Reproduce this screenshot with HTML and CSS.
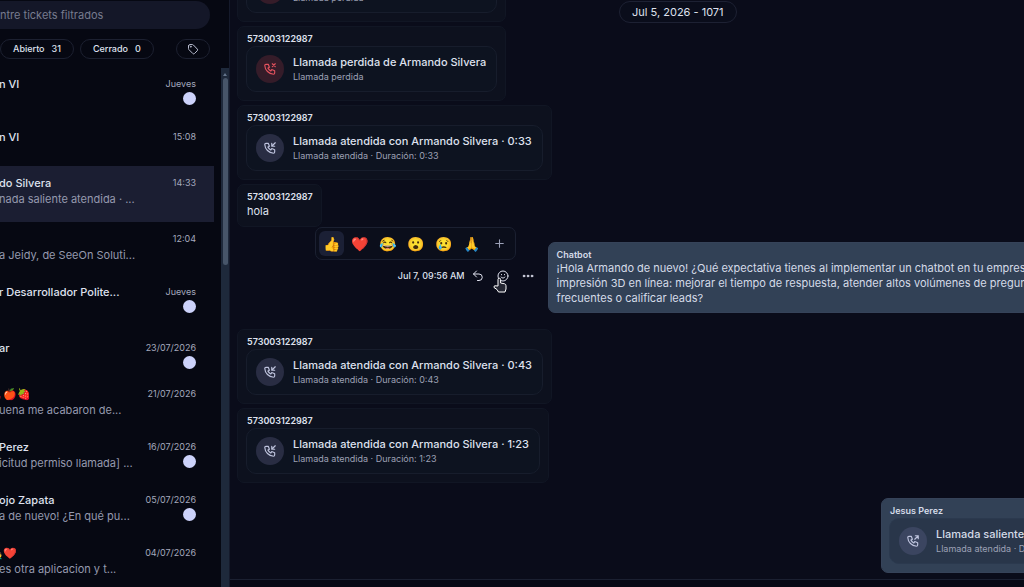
FILE: index.html
```html
<!DOCTYPE html>
<html lang="es">
<head>
<meta charset="utf-8">
<title>Tickets</title>
<link rel="stylesheet" href="styles.css">
</head>
<body>
<svg class="defs" aria-hidden="true">
  <symbol id="phone" viewBox="0 0 24 24"><path d="M5 4h4l2 5-2.500 1.500a11 11 0 0 0 5 5L15 13l5 2v4a2 2 0 0 1-2 2A16 16 0 0 1 3 6a2 2 0 0 1 2-2"/></symbol>
  <symbol id="call-in" viewBox="0 0 24 24"><use href="#phone"/><path d="M15 9l6-6M15 4v5h5"/></symbol>
  <symbol id="call-out" viewBox="0 0 24 24"><use href="#phone"/><path d="M15 9l6-6M16 3h5v5"/></symbol>
  <symbol id="call-miss" viewBox="0 0 24 24"><use href="#phone"/><path d="M16 3l5 5M21 3l-5 5"/></symbol>
</svg>
<div class="app">
  <aside class="sidebar">
    <input class="search" type="search" aria-label="Buscar tickets" placeholder="ntre tickets filtrados">
    <div class="filters">
      <button class="pill">Abierto<span>31</span></button>
      <button class="pill">Cerrado<span>0</span></button>
      <button class="pill pill-tag" aria-label="Etiquetas"><svg class="icon icon-small" viewBox="0 0 24 24"><path d="M3 6v5.200a3 3 0 0 0 .9 2.100l7.700 7.700a2.400 2.400 0 0 0 3.400 0l5.500-5.500a2.400 2.400 0 0 0 0-3.400L12.800 4a3 3 0 0 0-2.100-.9H6a3 3 0 0 0-3 3z"/><circle cx="7.500" cy="7.500" r=".8"/></svg></button>
    </div>
    <div class="list">
      <ul class="tickets">
        <li class="ticket"><strong>n VI</strong><time>Jueves</time><i class="badge"></i></li>
        <li class="ticket short"><strong>n VI</strong><time>15:08</time></li>
        <li class="ticket tall active"><strong>do Silvera</strong><time>14:33</time><p>nada saliente atendida · ...</p></li>
        <li class="ticket"><strong></strong><time>12:04</time><p>a Jeidy, de SeeOn Soluti...</p></li>
        <li class="ticket tall"><strong>r Desarrollador Polite...</strong><time>Jueves</time><i class="badge"></i></li>
        <li class="ticket short"><strong>ar</strong><time>23/07/2026</time><i class="badge"></i></li>
        <li class="ticket"><strong class="emoji-name">🍒🍎🍓</strong><time>21/07/2026</time><p>uena me acabaron de...</p></li>
        <li class="ticket"><strong>Perez</strong><time>16/07/2026</time><p>icitud permiso llamada] ...</p><i class="badge"></i></li>
        <li class="ticket"><strong>ojo Zapata</strong><time>05/07/2026</time><p>a de nuevo! ¿En qué pu...</p><i class="badge"></i></li>
        <li class="ticket"><strong class="emoji-name">👩‍❤️‍👨❤️</strong><time>04/07/2026</time><p>es otra aplicacion y t...</p></li>
      </ul>
      <div class="scrollbar" aria-hidden="true"><b></b><span></span></div>
    </div>
  </aside>
  <main class="chat">
    <div class="date">Jul 5, 2026 - 1071</div>
    <section class="thread">
      <article class="msg">
        <h3>573003122987</h3>
        <div class="call missed"><span class="disc"><svg class="icon"><use href="#call-miss"/></svg></span><div><h4>Llamada perdida de Armando Silvera</h4><p>Llamada perdida</p></div></div>
      </article>
      <article class="msg">
        <h3>573003122987</h3>
        <div class="call missed"><span class="disc"><svg class="icon"><use href="#call-miss"/></svg></span><div><h4>Llamada perdida de Armando Silvera</h4><p>Llamada perdida</p></div></div>
      </article>
      <article class="msg">
        <h3>573003122987</h3>
        <div class="call"><span class="disc"><svg class="icon"><use href="#call-in"/></svg></span><div><h4>Llamada atendida con Armando Silvera · 0:33</h4><p>Llamada atendida · Duración: 0:33</p></div></div>
      </article>
      <article class="msg">
        <h3>573003122987</h3>
        <p class="text">hola</p>
      </article>
      <div class="reply">
        <div class="actions">
          <div class="picker">
            <button class="on">👍</button><button>❤️</button><button>😂</button><button>😮</button><button>😢</button><button>🙏</button>
            <button aria-label="Más"><svg class="icon plus" viewBox="0 0 24 24"><path d="M12 5v14M5 12h14"/></svg></button>
          </div>
          <time>Jul 7, 09:56 AM</time>
          <button aria-label="Responder"><svg class="icon icon-small" viewBox="0 0 24 24"><path d="M9 14l-6-6 6-6M3 8h11a6.500 6.500 0 0 1 0 13h-3"/></svg></button>
          <button class="react" aria-label="Reaccionar"><svg class="icon icon-small" viewBox="0 0 24 24"><circle cx="12" cy="12" r="10"/><path d="M8 14s1.500 2 4 2 4-2 4-2M9 9v.5M15 9v.5"/></svg>
            <svg class="cursor" viewBox="0 0 14 16"><path d="M5 9V2.500a1.300 1.300 0 0 1 2.600 0V6l4 .8q1.400.4 1.400 2V12l-1 3H5.500L4 12.500 1 10.500q-.5-1.500 1-1.700z"/></svg></button>
          <button aria-label="Más opciones"><svg class="icon icon-small dots" viewBox="0 0 24 24"><circle cx="4" cy="12" r="2"/><circle cx="12" cy="12" r="2"/><circle cx="20" cy="12" r="2"/></svg></button>
        </div>
        <article class="msg out">
          <h3>Chatbot</h3>
          <p class="text">¡Hola Armando de nuevo! ¿Qué expectativa tienes al implementar un chatbot en tu empresa<br>impresión 3D en línea: mejorar el tiempo de respuesta, atender altos volúmenes de pregunt<br>frecuentes o calificar leads?</p>
        </article>
      </div>
      <article class="msg">
        <h3>573003122987</h3>
        <div class="call"><span class="disc"><svg class="icon"><use href="#call-in"/></svg></span><div><h4>Llamada atendida con Armando Silvera · 0:43</h4><p>Llamada atendida · Duración: 0:43</p></div></div>
      </article>
      <article class="msg">
        <h3>573003122987</h3>
        <div class="call"><span class="disc"><svg class="icon"><use href="#call-in"/></svg></span><div><h4>Llamada atendida con Armando Silvera · 1:23</h4><p>Llamada atendida · Duración: 1:23</p></div></div>
      </article>
      <article class="msg out last">
        <h3>Jesus Perez</h3>
        <div class="call"><span class="disc"><svg class="icon"><use href="#call-out"/></svg></span><div><h4>Llamada saliente</h4><p>Llamada atendida · D</p></div></div>
      </article>
    </section>
    <footer class="composer"></footer>
  </main>
</div>
</body>
</html>
```

FILE: styles.css
```css
* { box-sizing: border-box; }
body { margin: 0; background: #0a0c1a; color: #dfe1ee; font: 11px/14px Inter, "Noto Sans", sans-serif; }
h3, h4, p, ul { margin: 0; padding: 0; }
button { background: none; border: 0; padding: 0; color: inherit; font: inherit; }
.defs { position: absolute; width: 0; height: 0; }
.icon { width: 14px; height: 14px; fill: none; stroke: currentColor; stroke-width: 2; stroke-linecap: round; stroke-linejoin: round; display: block; }
.icon-small { width: 12px; height: 12px; }
.app { display: flex; height: 100vh; overflow: hidden; }

.sidebar { width: 230px; flex: none; display: flex; flex-direction: column; background: #060812; border-right: 1px solid #151a2b; overflow: hidden; }
.search { appearance: none; flex: none; height: 28px; margin: 1px 19px 10px 0; padding: 0; border: 0; border-radius: 0 14px 14px 0; background: #141728; color: #d9dbe8; font: inherit; }
.search::placeholder { color: #777b8e; opacity: 1; }
.filters { display: flex; gap: 6px; margin-right: 19px; }
.pill { height: 20px; padding: 0 12px; display: flex; align-items: center; gap: 7px; border: 1px solid #1c2030; border-radius: 10px; font-size: 9px; font-weight: 500; }
.pill-tag { margin-left: auto; padding: 0 10px; color: #b9bdd0; }
.list { flex: 1; min-height: 0; display: flex; margin-top: 9px; }
.tickets { flex: 1; list-style: none; margin: -1px 7px 0 0; }
.ticket { display: grid; grid-template-columns: 1fr auto; grid-template-rows: 14px 16px; row-gap: 1px; height: 53px; padding: 10px 18px 0 0; }
.ticket.short { height: 46px; }
.ticket.tall { height: 56px; }
.ticket.active { background: #1b1e32; }
.ticket strong { font-weight: 500; white-space: nowrap; }
.ticket .emoji-name { margin-left: -10px; }
.ticket time { grid-column: 2; font-size: 9px; line-height: 14px; color: #a4a8bd; text-align: right; }
.ticket p { grid-column: 1; grid-row: 2; line-height: 16px; color: #9599ae; white-space: nowrap; }
.ticket strong, .ticket p { text-indent: -1px; }
.badge { grid-column: 2; grid-row: 2; justify-self: end; width: 13px; height: 13px; border-radius: 50%; background: #ccd2fa; }
.scrollbar { width: 8px; background: #1e293b; display: flex; flex-direction: column; align-items: center; }
.scrollbar b { border: 2px solid transparent; border-bottom: 3px solid #64748b; height: 8px; margin-bottom: 2px; }
.scrollbar span { width: 5px; height: 36%; border-radius: 3px; background: #475569; }

.chat { flex: 1; min-width: 0; display: flex; flex-direction: column; position: relative; overflow: hidden; }
.date { position: absolute; z-index: 1; top: 1px; left: 49%; padding: 3px 12px; border: 1px solid #1d2133; border-radius: 11px; background: #0a0d1b; }
.thread { flex: 1; min-height: 0; display: flex; flex-direction: column; justify-content: flex-end; align-items: flex-start; gap: 4px; padding-bottom: 6px; }
.composer { flex: none; height: 8px; border-top: 1px solid #1b2031; background: #070915; }
.msg { flex: none; margin-left: 7px; padding: 5px 8px 8px; border: 1px solid #111624; border-radius: 7px; background: #0d111e; white-space: nowrap; }
.msg h3 { padding-left: 1px; font-size: 9px; line-height: 14px; font-weight: 600; }
.msg .text { padding-left: 1px; line-height: 14px; }
.call { display: flex; align-items: center; gap: 9px; padding: 7px 10px 7px 9px; border: 1px solid #171d2c; border-radius: 10px; background: #0d1320; }
.call h4 { font-size: 11px; line-height: 16px; font-weight: 500; }
.call p { font-size: 9px; line-height: 14px; color: #9da1b5; }
.disc { flex: none; width: 28px; height: 28px; display: grid; place-items: center; border-radius: 50%; background: #292d43; color: #bec3dd; }
.missed .disc { background: #351c29; color: #e3525e; }
.reply { align-self: stretch; display: flex; margin: 11px 0 12px; }
.actions { position: relative; width: 40%; flex: none; height: 14px; margin-top: 27px; padding-right: 14px; display: flex; justify-content: flex-end; align-items: center; gap: 13px; }
.actions time { font-size: 9px; font-weight: 500; margin-right: -6px; }
.react { position: relative; }
.cursor { position: absolute; left: -4px; top: 7px; width: 14px; height: 16px; fill: #252733; stroke: #fff; stroke-width: 1; }
.dots { fill: currentColor; stroke-width: 1; }
.picker { position: absolute; right: 32px; bottom: 23px; display: flex; padding: 3px; border: 1px solid #1b2031; border-radius: 7px; background: #0b0e1b; }
.picker button { width: 25px; height: 25px; margin-right: 3px; display: grid; place-items: center; border-radius: 6px; font-size: 14px; line-height: 20px; }
.picker button:last-child { margin-right: 0; }
.picker .on { background: #1b2035; }
.plus { width: 13px; height: 13px; color: #9ca1b8; }
.out { background: #324156; border-color: #364359; color: #d5dbe8; }
.reply .out { flex: 1; margin-left: 0; padding: 5px 8px 6px; }
.reply .text { padding-left: 0; line-height: 15px; }
.reply h3 { padding-left: 0; line-height: 13px; }
.out .call { background: #29364a; border-color: #2b394e; }
.out .disc { background: #3b4560; }
.out.last { align-self: stretch; margin: 11px -20px 0 82%; padding: 5px 7px 8px; }
```
